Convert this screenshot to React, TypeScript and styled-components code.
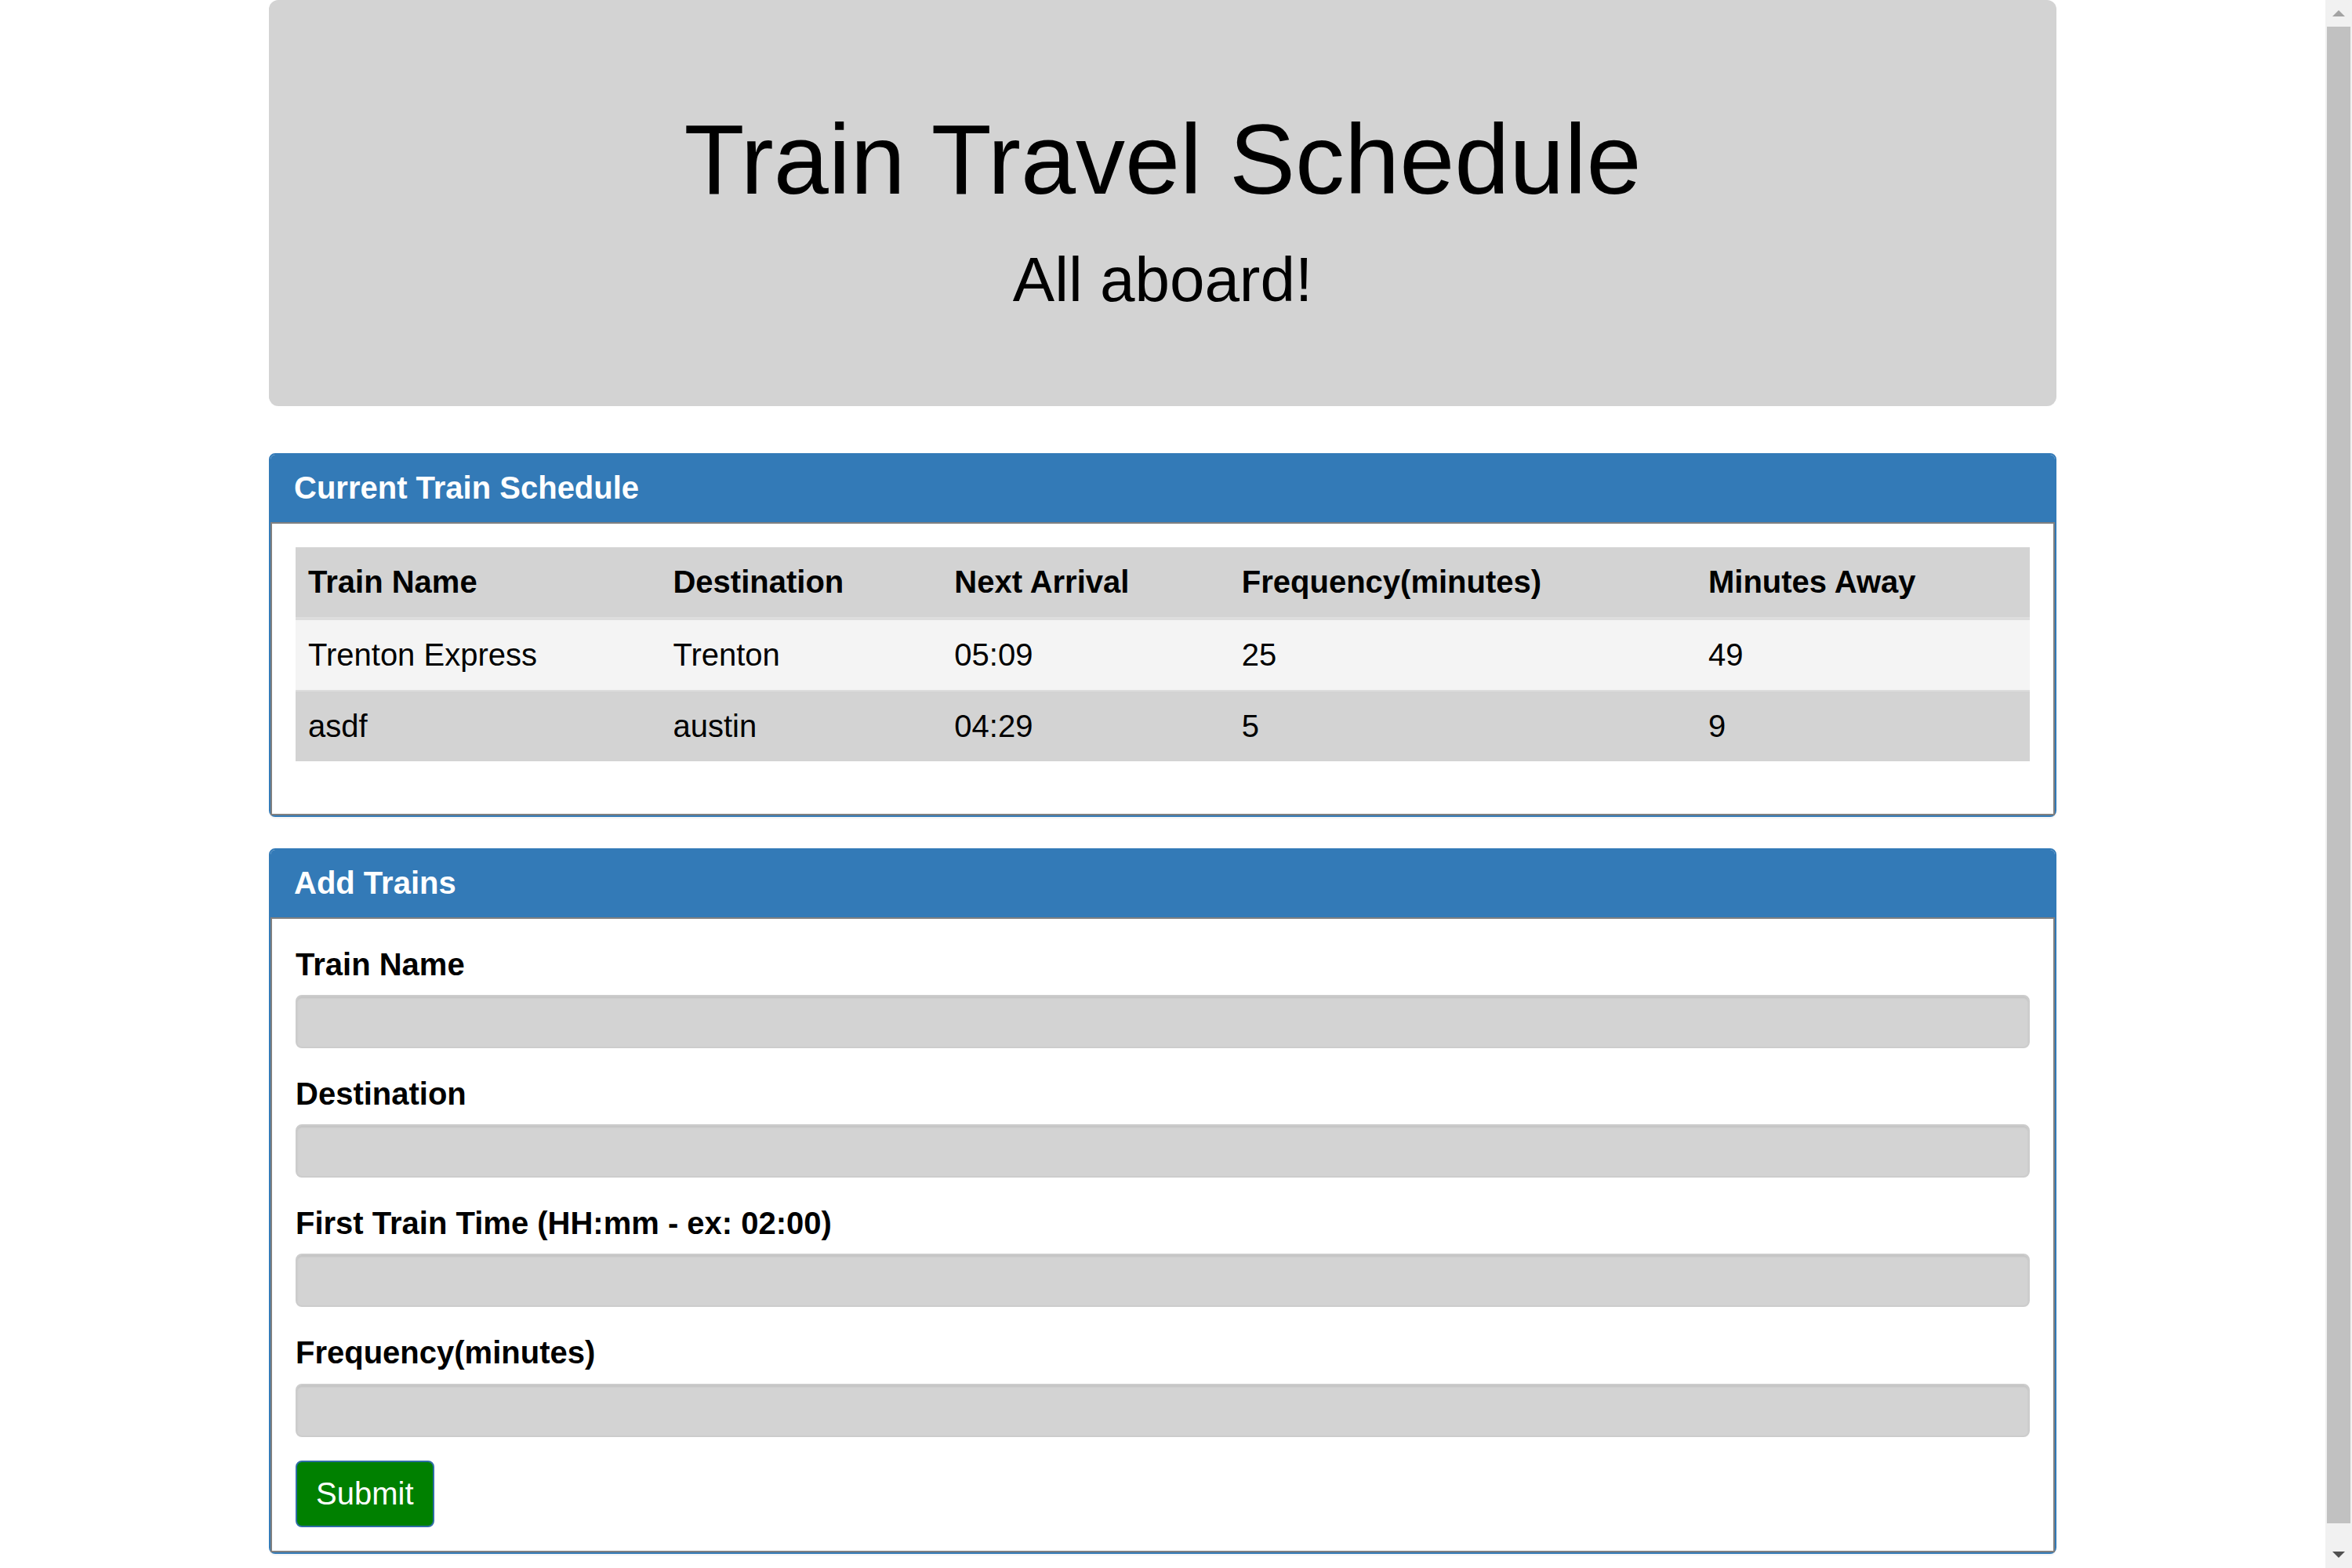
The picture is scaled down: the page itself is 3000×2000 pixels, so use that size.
import React from "react";
import styled, { createGlobalStyle } from "styled-components";

const GlobalStyle = createGlobalStyle`
  html, body {
    margin: 0;
    height: 100%;
    overflow: hidden;
  }
  body {
    font-family: "Liberation Sans", Arial, Helvetica, sans-serif;
    color: #000;
    background: #fff;
  }
  * { box-sizing: border-box; }
`;

const Viewport = styled.div`
  display: flex;
  height: 100vh;
  width: 100%;
`;

const Page = styled.main`
  flex: 1;
  min-width: 0;
  overflow: hidden;
`;

const Container = styled.div`
  width: 2340px;
  margin: 0 auto;
  padding: 0 30px;
`;

const Jumbotron = styled.header`
  background: #d3d3d3;
  border-radius: 12px;
  padding: 135px 120px 104px;
  margin-bottom: 60px;
  text-align: center;
`;

const Title = styled.h1`
  margin: 0;
  font-size: 126px;
  font-weight: 400;
  line-height: 1.1;
`;

const Tagline = styled.p`
  margin: 26px 0 0;
  font-size: 80px;
  line-height: 114px;
`;

const Panel = styled.section`
  background: #fff;
  border: 2px solid #337ab7;
  border-radius: 8px;
  margin-bottom: 40px;
  box-shadow: 0 2px 2px rgba(0, 0, 0, 0.05);
`;

const PanelHeading = styled.div`
  background: #337ab7;
  color: #fff;
  padding: 20px 30px;
  border-bottom: 2px solid transparent;
  border-radius: 6px 6px 0 0;
`;

const PanelTitle = styled.h3`
  margin: 0;
  font-size: 40px;
  font-weight: 700;
  line-height: 1.1;
`;

const PanelBody = styled.div`
  border: 2px solid gray;
  padding: 30px;
`;

const Table = styled.table`
  width: 100%;
  border-collapse: collapse;
  border-spacing: 0;
  margin-bottom: 37px;
  background: #d3d3d3;
  font-size: 40px;
`;

const Th = styled.th`
  text-align: left;
  font-weight: 700;
  padding: 16px;
  line-height: 1.42857;
  border-bottom: 4px solid #ddd;
  white-space: nowrap;
`;

const Row = styled.tr<{ $odd: boolean }>`
  background: ${(p) => (p.$odd ? "#f4f4f4" : "#d3d3d3")};
`;

const Td = styled.td`
  padding: 16px;
  line-height: 1.42857;
  border-top: 2px solid #ddd;
  white-space: nowrap;
`;

const FormGroup = styled.div`
  margin-bottom: 30px;
`;

const Label = styled.label`
  display: block;
  font-size: 40px;
  font-weight: 700;
  line-height: 1.42857;
  margin-bottom: 10px;
`;

const Input = styled.input`
  display: block;
  width: 100%;
  height: 68px;
  padding: 12px 24px;
  font-size: 40px;
  font-family: inherit;
  background: #d3d3d3;
  border: 2px solid #ccc;
  border-radius: 8px;
  box-shadow: inset 0 2px 2px rgba(0, 0, 0, 0.075);
  outline: none;
`;

const SubmitButton = styled.button`
  display: inline-block;
  background: green;
  color: #fff;
  border: 2px solid #2e6da4;
  border-radius: 8px;
  padding: 12px 24px;
  font-family: inherit;
  font-size: 40px;
  line-height: 1.42857;
  cursor: pointer;
`;

const Scrollbar = styled.aside`
  width: 34px;
  flex: none;
  background: #f1f1f1;
  display: flex;
  flex-direction: column;
`;

const ScrollButton = styled.div`
  height: 34px;
  flex: none;
  display: flex;
  align-items: center;
  justify-content: center;
`;

const Arrow = styled.span<{ $dir: "up" | "down"; $color: string }>`
  width: 0;
  height: 0;
  border-left: 8px solid transparent;
  border-right: 8px solid transparent;
  ${(p) =>
    p.$dir === "up"
      ? `border-bottom: 8px solid ${p.$color};`
      : `border-top: 8px solid ${p.$color};`}
`;

const Track = styled.div`
  flex: 1;
  display: flex;
  flex-direction: column;
  padding: 0 2px 23px;
`;

const Thumb = styled.div`
  flex: 1;
  background: #c1c1c1;
`;

const trains = [
  { name: "Trenton Express", destination: "Trenton", next: "05:09", frequency: "25", away: "49" },
  { name: "asdf", destination: "austin", next: "04:29", frequency: "5", away: "9" },
];

const fields = [
  { id: "train-name", label: "Train Name" },
  { id: "destination", label: "Destination" },
  { id: "first-train", label: "First Train Time (HH:mm - ex: 02:00)" },
  { id: "frequency", label: "Frequency(minutes)" },
];

export default function App() {
  return (
    <>
      <GlobalStyle />
      <Viewport>
        <Page>
          <Container>
            <Jumbotron>
              <Title>Train Travel Schedule</Title>
              <Tagline>All aboard!</Tagline>
            </Jumbotron>

            <Panel>
              <PanelHeading>
                <PanelTitle>Current Train Schedule</PanelTitle>
              </PanelHeading>
              <PanelBody>
                <Table>
                  <thead>
                    <tr>
                      <Th>Train Name</Th>
                      <Th>Destination</Th>
                      <Th>Next Arrival</Th>
                      <Th>Frequency(minutes)</Th>
                      <Th>Minutes Away</Th>
                    </tr>
                  </thead>
                  <tbody>
                    {trains.map((t, i) => (
                      <Row key={t.name} $odd={i % 2 === 0}>
                        <Td>{t.name}</Td>
                        <Td>{t.destination}</Td>
                        <Td>{t.next}</Td>
                        <Td>{t.frequency}</Td>
                        <Td>{t.away}</Td>
                      </Row>
                    ))}
                  </tbody>
                </Table>
              </PanelBody>
            </Panel>

            <Panel>
              <PanelHeading>
                <PanelTitle>Add Trains</PanelTitle>
              </PanelHeading>
              <PanelBody>
                <form onSubmit={(e) => e.preventDefault()}>
                  {fields.map((f) => (
                    <FormGroup key={f.id}>
                      <Label htmlFor={f.id}>{f.label}</Label>
                      <Input id={f.id} type="text" />
                    </FormGroup>
                  ))}
                  <SubmitButton type="submit">Submit</SubmitButton>
                </form>
              </PanelBody>
            </Panel>
          </Container>
        </Page>
        <Scrollbar>
          <ScrollButton>
            <Arrow $dir="up" $color="#a3a3a3" />
          </ScrollButton>
          <Track>
            <Thumb />
          </Track>
          <ScrollButton>
            <Arrow $dir="down" $color="#505050" />
          </ScrollButton>
        </Scrollbar>
      </Viewport>
    </>
  );
}
